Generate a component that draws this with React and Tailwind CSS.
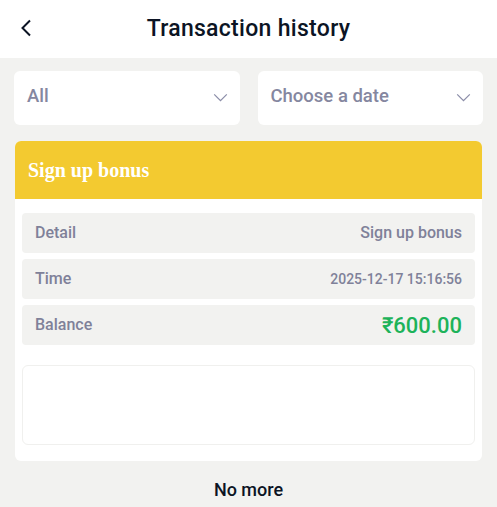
import React from "react";

const Chevron = ({ className }) => (
  <svg viewBox="0 0 16 10" className={className} fill="none" stroke="currentColor" strokeWidth="1.4">
    <path d="M1 1.5 L8 8.5 L15 1.5" />
  </svg>
);

const Row = ({ label, children }) => (
  <div className="flex items-center justify-between h-[40px] px-[13px] rounded-[4px] bg-[#f2f2f0]">
    <span className="text-[16px] font-medium text-[#7f8199]">{label}</span>
    {children}
  </div>
);

const App = () => {
  return (
    <div
      className="w-[497px] h-[507px] bg-[#f2f2f0] flex flex-col"
      style={{ fontFamily: "Roboto, 'Noto Sans', sans-serif" }}
    >
      <div className="relative h-[58px] bg-white flex items-center justify-center shrink-0">
        <button className="absolute left-[20px] top-[19px] text-[#0c1424]">
          <svg viewBox="0 0 12 18" className="w-[12px] h-[18px]" fill="none" stroke="currentColor" strokeWidth="2">
            <path d="M10 1.5 L2.5 9 L10 16.5" />
          </svg>
        </button>
        <h1 className="text-[23px] font-medium text-[#0c1424] tracking-[0.3px]">Transaction history</h1>
      </div>

      <div className="flex gap-[18px] px-[14px] pt-[13px]">
        <div className="flex-1 h-[54px] bg-white rounded-[6px] flex items-center justify-between pl-[13px] pr-[12px]">
          <span className="text-[18.5px] font-medium text-[#8587a0] pb-[2px]">All</span>
          <Chevron className="w-[15px] h-[9px] mb-[2px] text-[#8b8da8]" />
        </div>
        <div className="flex-1 h-[54px] bg-white rounded-[6px] flex items-center justify-between pl-[13px] pr-[12px]">
          <span className="text-[18.5px] font-medium text-[#8587a0] pb-[2px]">Choose a date</span>
          <Chevron className="w-[15px] h-[9px] mb-[2px] text-[#8b8da8]" />
        </div>
      </div>

      <div className="mx-[15px] mt-[16px] bg-white rounded-[6px] overflow-hidden">
        <div className="h-[58px] bg-[#f3ca30] flex items-center px-[13px]">
          <span
            className="text-[20px] font-bold text-white"
            style={{ fontFamily: "'Liberation Serif', serif" }}
          >
            Sign up bonus
          </span>
        </div>
        <div className="px-[7px] pt-[14px] pb-[16px] flex flex-col gap-[6px]">
          <Row label="Detail">
            <span className="text-[16px] font-medium text-[#7f8199]">Sign up bonus</span>
          </Row>
          <Row label="Time">
            <span className="text-[14px] font-medium text-[#7f8199]">2025-12-17 15:16:56</span>
          </Row>
          <Row label="Balance">
            <span className="text-[22px] font-medium text-[#1db35a]">₹600.00</span>
          </Row>
          <div className="mt-[14px] h-[80px] rounded-[6px] border border-[#f0f0ee]"></div>
        </div>
      </div>

      <div className="text-center mt-[15px] text-[18px] font-medium text-[#0c1424]">No more</div>
    </div>
  );
};

export default App;
